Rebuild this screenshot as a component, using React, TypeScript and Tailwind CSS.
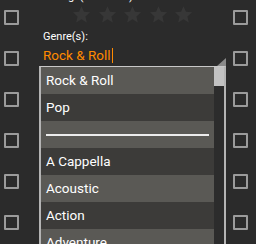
import React from "react";

const Box = () => (
  <div className="w-[15px] h-[15px] border-2 border-[#9b9b9b] rounded-[1px]" />
);

const Star = () => (
  <svg width="19" height="19" viewBox="0 0 24 24">
    <path
      d="M12 1.5l3.1 7.1 7.7.7-5.8 5.1 1.7 7.6L12 18.1 5.3 22l1.7-7.6-5.8-5.1 7.7-.7z"
      fill="#373737"
    />
  </svg>
);

const items = ["Rock & Roll", "Pop", "---", "A Cappella", "Acoustic", "Action", "Adventure"];

export default function App() {
  return (
    <div
      className="relative w-[256px] h-[244px] overflow-hidden bg-[#2b2b2b] text-white"
      style={{ fontFamily: "Roboto, 'Liberation Sans', sans-serif" }}
    >
      <div className="flex h-full">
        <div className="flex flex-col gap-[26px] pt-[10px] pl-[4px] w-[39px]">
          {Array.from({ length: 6 }).map((_, i) => (
            <Box key={i} />
          ))}
        </div>
        <div className="flex-1 flex flex-col pl-[4px]">
          <div className="text-[11px] leading-[13px] mt-[-10px]">Rating: (Unknown)</div>
          <div className="flex gap-[6.5px] mt-[2px] ml-[29px]">
            {Array.from({ length: 5 }).map((_, i) => (
              <Star key={i} />
            ))}
          </div>
          <div className="text-[11px] leading-[13px] mt-[6px]">Genre(s):</div>
          <div className="flex items-center mt-[4px] h-[16px]">
            <span className="text-[13.5px] text-[#ff8a00]">Rock &amp; Roll</span>
            <span className="w-px h-[15px] bg-[#ff8a00] ml-[1px]" />
          </div>
        </div>
        <div className="flex flex-col gap-[26px] pt-[10px] pr-[8px]">
          {Array.from({ length: 6 }).map((_, i) => (
            <Box key={i} />
          ))}
        </div>
      </div>

      <div className="absolute left-[39px] top-[58px] w-[187px]">
        <div className="flex justify-end h-[8px]">
          <svg width="9" height="8" viewBox="0 0 9 8">
            <polygon points="0,8 9,0 9,8" fill="#8a8a8a" />
          </svg>
        </div>
        <div className="flex border-t border-[#c8c8c8] border-l-2 border-l-[#b4b4b4] border-r-2 border-r-[#b4b4b4] h-[200px]">
          <div className="flex-1 flex flex-col">
            {items.map((t, i) => (
              <div
                key={i}
                className={`h-[27px] shrink-0 flex items-center pl-[5px] text-[13.5px] ${
                  i % 2 === 0 ? "bg-[#5a5955]" : "bg-[#3c3b39]"
                }`}
              >
                {t === "---" ? (
                  <div className="w-[163px] h-[2px] bg-[#ececec]" />
                ) : (
                  t
                )}
              </div>
            ))}
          </div>
          <div className="w-[10px] bg-[#2c2c2c] flex flex-col">
            <div className="h-[19px] bg-[#c2c2c2]" />
          </div>
        </div>
      </div>
    </div>
  );
}
